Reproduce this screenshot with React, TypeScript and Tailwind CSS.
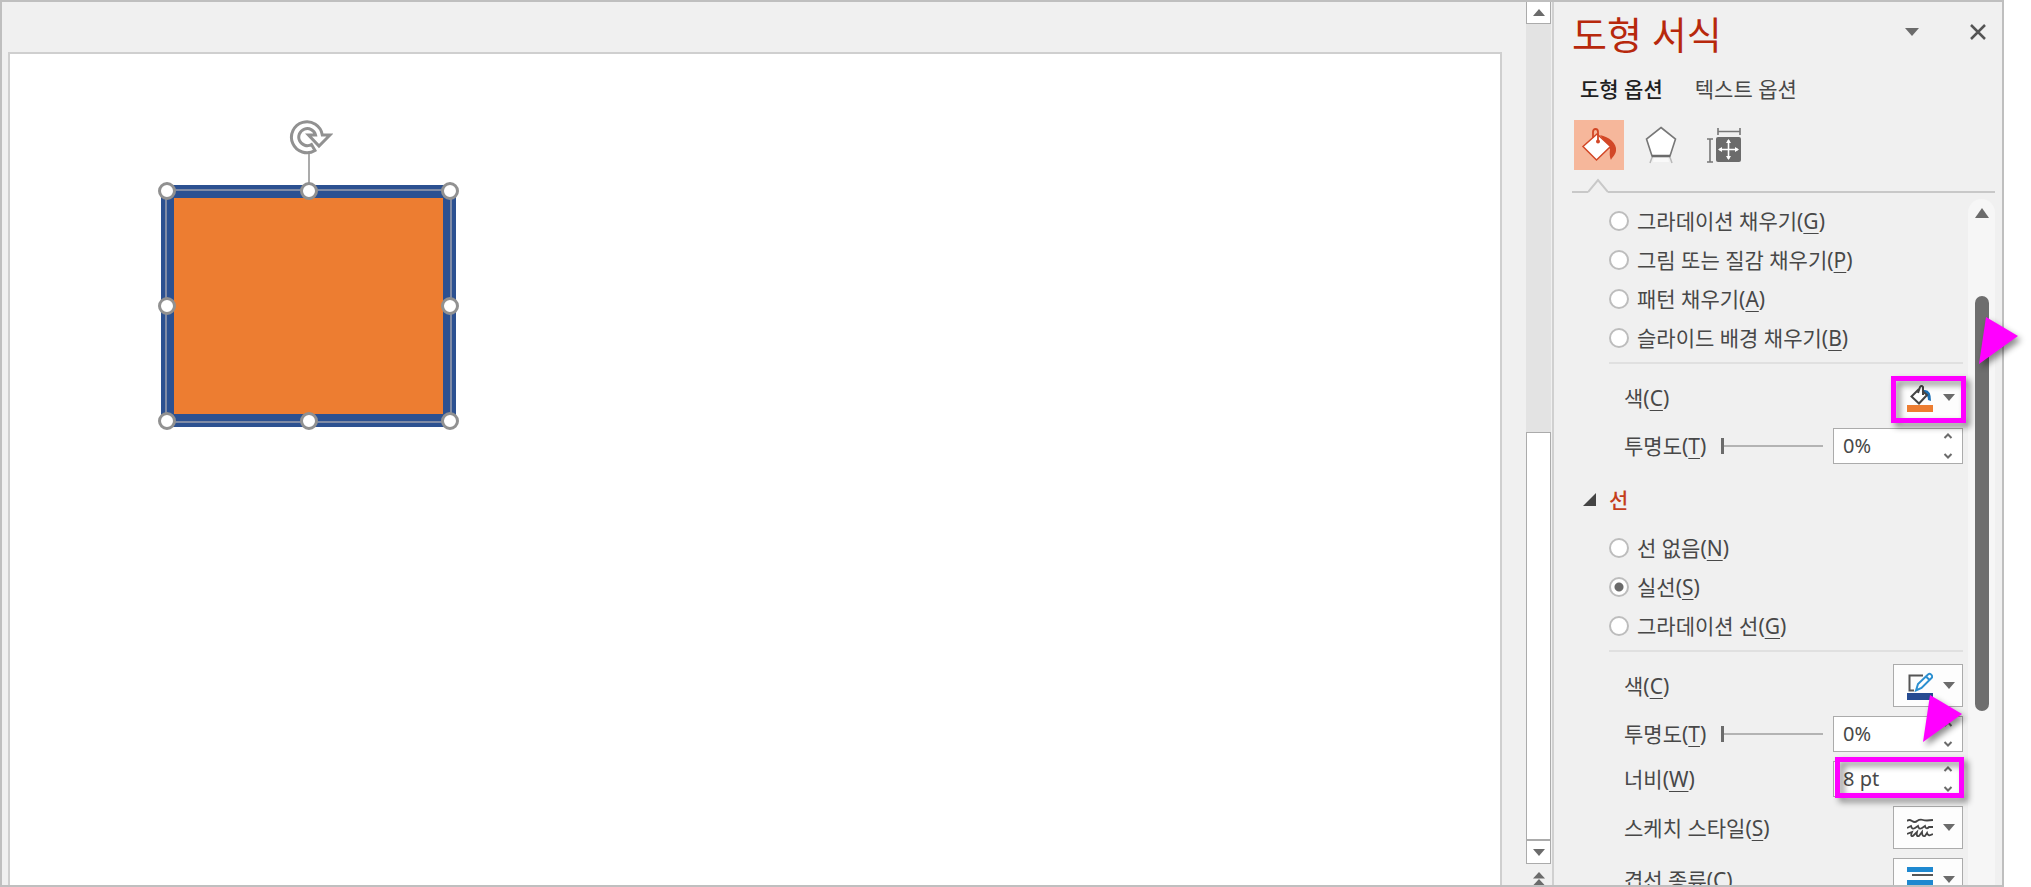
import { ReactNode, useState } from 'react';

interface Option {
  label: string;
  accel: string;
}

const fillOptions: Option[] = [
  { label: '그라데이션 채우기', accel: 'G' },
  { label: '그림 또는 질감 채우기', accel: 'P' },
  { label: '패턴 채우기', accel: 'A' },
  { label: '슬라이드 배경 채우기', accel: 'B' },
];

const lineOptions: Option[] = [
  { label: '선 없음', accel: 'N' },
  { label: '실선', accel: 'S' },
  { label: '그라데이션 선', accel: 'G' },
];

const handles = [
  'left-0 top-0',
  'left-1/2 top-0',
  'left-full top-0',
  'left-0 top-1/2',
  'left-full top-1/2',
  'left-0 top-full',
  'left-1/2 top-full',
  'left-full top-full',
];

function Accel({ label, accel }: Option) {
  return (
    <>
      {label}(<span className="underline decoration-1 underline-offset-4">{accel}</span>)
    </>
  );
}

function Triangle({ up = false, className = 'w-3 h-[7px]' }: { up?: boolean; className?: string }) {
  return (
    <svg viewBox="0 0 12 7" preserveAspectRatio="none" className={className} fill="#6b6b6b">
      <path d={up ? 'M0 7 L6 0 L12 7 Z' : 'M0 0 H12 L6 7 Z'} />
    </svg>
  );
}

function RadioList({ name, options, initial }: { name: string; options: Option[]; initial?: string }) {
  const [value, setValue] = useState(initial);
  return (
    <div>
      {options.map((o) => (
        <label key={o.label} className="flex items-center gap-2 h-[39px]">
          <input
            type="radio"
            name={name}
            checked={value === o.label}
            onChange={() => setValue(o.label)}
            className="appearance-none w-5 h-5 rounded-full border-2 border-[#bdbdbd] bg-white checked:bg-[radial-gradient(circle,#6b6b6b_4px,#fff_5px)]"
          />
          <span>
            <Accel {...o} />
          </span>
        </label>
      ))}
    </div>
  );
}

function Spin({ id, initial }: { id: string; initial: string }) {
  const [value, setValue] = useState(initial);
  return (
    <div className="flex items-center w-[130px] h-9 bg-white border border-[#ababab]">
      <input
        id={id}
        value={value}
        onChange={(e) => setValue(e.target.value)}
        className="flex-1 min-w-0 pl-[9px] text-[20px] leading-[28px] outline-none bg-transparent"
      />
      <div className="flex flex-col justify-between w-7 h-[26px] items-center">
        <button aria-label="늘리기">
          <svg width="10" height="6" viewBox="0 0 10 6" fill="none" stroke="#6b6b6b" strokeWidth="2" className="block">
            <path d="M1.5 5 L5 1.5 L8.5 5" />
          </svg>
        </button>
        <button aria-label="줄이기">
          <svg width="10" height="6" viewBox="0 0 10 6" fill="none" stroke="#6b6b6b" strokeWidth="2" className="block">
            <path d="M1.5 1 L5 4.5 L8.5 1" />
          </svg>
        </button>
      </div>
    </div>
  );
}

function Picker({ label, children }: { label: string; children: ReactNode }) {
  return (
    <button aria-label={label} className="flex items-center gap-[10px] w-[70px] h-[43px] pl-[13px] bg-[#fdfdfd] border border-[#ababab]">
      {children}
      <Triangle />
    </button>
  );
}

function Row({ label, accel, htmlFor, children }: Option & { htmlFor?: string; children: ReactNode }) {
  return (
    <div className="flex items-center pl-[15px]">
      <label htmlFor={htmlFor} className="mr-auto">
        <Accel label={label} accel={accel} />
      </label>
      {children}
    </div>
  );
}

function Transparency({ id }: { id: string }) {
  return (
    <Row label="투명도" accel="T" htmlFor={id}>
      <input
        type="range"
        defaultValue={0}
        aria-label="투명도"
        className="appearance-none w-[102px] h-4 mr-[10px] bg-[linear-gradient(#b3b3b3,#b3b3b3)] bg-[length:100%_2px] bg-center bg-no-repeat [&::-webkit-slider-thumb]:appearance-none [&::-webkit-slider-thumb]:w-[3px] [&::-webkit-slider-thumb]:h-4 [&::-webkit-slider-thumb]:bg-[#6b6b6b]"
      />
      <Spin id={id} initial="0%" />
    </Row>
  );
}

function Pointer({ className }: { className: string }) {
  return (
    <svg
      width="39"
      height="47"
      viewBox="0 0 39 47"
      fill="#ff00ff"
      className={`absolute z-10 overflow-visible drop-shadow-[3px_4px_3px_rgba(0,0,0,0.45)] ${className}`}
    >
      <path d="M7 0 L39 19 L0 47 Z" />
    </svg>
  );
}

function Canvas() {
  return (
    <main className="flex-1 min-w-0 pt-[50px] pl-[6px] pr-6">
      <div className="relative h-full bg-white border-2 border-b-0 border-[#cfcfcf]">
        <div className="absolute left-[151px] top-[131px] w-[295px] h-[242px] bg-[#ed7d31] border-[13px] border-[#2c5191]">
          <div className="absolute -inset-[9px] border-2 border-[#7f8ba6]">
            <div className="absolute left-1/2 bottom-full w-[2px] h-10 -translate-x-1/2 bg-[#ababab]" />
            <svg width="44" height="36" viewBox="0 0 44 36" className="absolute left-1/2 bottom-full mb-[36px] -ml-[20px]">
              <circle cx="18" cy="18" r="16" fill="#fff" />
              <path
                d="M26 31.5 A15.5 15.5 0 1 1 33.3 16 H41 L30 27 L19.500 16 H26.5 A8.500 8.500 0 1 0 22.500 25.500 Z"
                fill="#fff"
                stroke="#919191"
                strokeWidth="3"
              />
            </svg>
            {handles.map((pos) => (
              <span key={pos} className={`absolute w-[18px] h-[18px] -translate-1/2 rounded-full bg-white border-3 border-[#919191] ${pos}`} />
            ))}
          </div>
        </div>
      </div>
    </main>
  );
}

function SlideScrollbar() {
  return (
    <div className="flex flex-col w-[26px] shrink-0">
      <button aria-label="위로" className="flex items-center justify-center w-[25px] h-[22px] bg-white border border-t-0 border-[#ababab]">
        <Triangle up />
      </button>
      <div className="flex flex-col justify-end flex-1 w-[25px] bg-[#e3e3e3]">
        <div className="h-1/2 bg-white border border-[#ababab]" />
      </div>
      <button aria-label="아래로" className="flex items-center justify-center w-[25px] h-6 bg-white border border-[#ababab]">
        <Triangle />
      </button>
      <button aria-label="이전 슬라이드" className="flex flex-col items-center w-[25px] h-[21px] pt-2">
        <Triangle up />
        <Triangle up />
      </button>
    </div>
  );
}

function Header() {
  return (
    <header>
      <div className="flex items-start pl-[18px] pr-4 pt-[11px]">
        <h1 className="mr-auto text-[38px] leading-[42px] text-[#b7280c]">도형 서식</h1>
        <button aria-label="작업창 옵션" className="flex items-center h-[38px] mr-[51px]">
          <Triangle className="w-[14px] h-2" />
        </button>
        <button aria-label="닫기" className="flex items-center h-[38px]">
          <svg width="16" height="16" viewBox="0 0 16 16" stroke="#555" strokeWidth="2.5">
            <path d="M1 1 L15 15 M15 1 L1 15" />
          </svg>
        </button>
      </div>
      <div className="flex gap-8 pl-[26px] mt-5 leading-[28px]">
        <button className="font-medium text-[#1f1f1f]">도형 옵션</button>
        <button>텍스트 옵션</button>
      </div>
      <div className="flex items-center pl-5 mt-[17px]">
        <button aria-label="채우기 및 선" className="flex items-center justify-center w-[50px] h-[50px] bg-[#f6b79b]">
          <svg width="36" height="36" viewBox="0 0 36 36">
            <path d="M19 8 C28 10 36 16 35 24 C34 29 31 30 30 33 Q28 29 29 22 Z" fill="#d24726" />
            <path d="M16 7 L29.500 19.500 L15.500 33 L2 19.500 Z" fill="#fff" stroke="#d24726" strokeWidth="1.5" />
            <path d="M12 11 V5 Q12 2 14.500 2 Q17 2 17 5 V14" fill="none" stroke="#d24726" strokeWidth="1.8" />
            <circle cx="17" cy="14.500" r="2" fill="#d24726" />
          </svg>
        </button>
        <button aria-label="효과" className="ml-[21px]">
          <svg width="32" height="38" viewBox="0 0 32 38" className="block">
            <path d="M7.500 30 L5 37 M24.500 30 L27 37" stroke="#b8b8b8" strokeWidth="1.5" />
            <path d="M16 1.500 L30.500 13 L25 30 H7 L1.500 13 Z" fill="#fff" stroke="#777" strokeWidth="1.6" />
            <path d="M7 30 H25" stroke="#6b6b6b" strokeWidth="2.5" />
            <path d="M9 32 H23 L24 36 H8 Z" fill="#f9f9f9" />
          </svg>
        </button>
        <button aria-label="크기 및 속성" className="ml-[29px]">
          <svg width="36" height="36" viewBox="0 0 36 36" className="block" stroke="#777" fill="none" strokeWidth="1.6">
            <path d="M12 1 V8 M34 1 V8 M12 4.500 H34 M1 12 H7 M1 35 H7 M4 12 V35" />
            <rect x="10" y="10" width="25" height="25" rx="2" fill="#6b6b6b" stroke="none" />
            <path d="M13 22.500 H32 M22.500 13 V32" stroke="#fff" />
            <path d="M22.500 12 L25 16 H20 Z M22.500 33 L25 29 H20 Z M12 22.500 L16 20 V25 Z M33 22.500 L29 20 V25 Z" fill="#fff" stroke="none" />
          </svg>
        </button>
      </div>
      <div className="flex items-end mt-2 ml-[18px] mr-[7px]">
        <div className="w-4 h-[2px] bg-[#c8c8c8]" />
        <svg width="20" height="15" viewBox="0 0 20 15" fill="none" stroke="#c8c8c8" strokeWidth="2">
          <path d="M0 14 L10 2 L20 14" />
        </svg>
        <div className="flex-1 h-[2px] bg-[#c8c8c8]" />
      </div>
    </header>
  );
}

export default function App() {
  return (
    <div className="h-screen pr-[27px] bg-white overflow-hidden text-[21px] text-[#484848] font-['Noto_Sans','Noto_Sans_CJK_KR',sans-serif]">
      <div className="flex h-full bg-[#f0f0f0] border-2 border-[#bfbfbf]">
        <Canvas />
        <SlideScrollbar />
        <aside className="flex flex-col w-[450px] shrink-0 border-l-2 border-[#d0d0d0]">
          <Header />
          <div className="flex flex-1 min-h-0 pr-[7px]">
            <div className="flex-1 overflow-y-clip pl-[55px] pr-[5px] pt-2 leading-[28px]">
              <RadioList name="fill" options={fillOptions} />
              <hr className="mt-[5px] mb-3 border-t-2 border-[#e0e0e0]" />
              <div className="flex flex-col gap-[9px]">
                <Row label="색" accel="C">
                  <div className="relative">
                    <Picker label="채우기 색">
                      <svg width="26" height="28" viewBox="0 0 26 28">
                        <path d="M17 6 Q24 5 24 17 L21 16 Q21 11 17 9 Z" fill="#1b6fb5" />
                        <path d="M12 5 L4.500 12.500 L12 19.500 L20 11 L15.500 7" fill="#fff" stroke="#444" strokeWidth="2" />
                        <path d="M11 9 L13 3 Q14.500 1 16 3 V11" fill="none" stroke="#444" strokeWidth="2" />
                        <rect y="21" width="26" height="7" fill="#ed7d31" />
                      </svg>
                    </Picker>
                    <div className="absolute -left-[2px] top-0 w-[75px] h-[47px] border-5 border-[#ff00ff] drop-shadow-[4px_4px_3px_rgba(0,0,0,0.45)]" />
                  </div>
                </Row>
                <Transparency id="fill-transparency" />
              </div>

              <div className="flex items-center mt-4 mb-[9px] h-[39px]">
                <svg width="13" height="13" viewBox="0 0 13 13" fill="#444" className="-ml-[26px] mr-[13px]">
                  <path d="M13 0 V13 H0 Z" />
                </svg>
                <h2 className="font-medium text-[#c43e1c]">선</h2>
              </div>
              <RadioList name="line" options={lineOptions} initial="실선" />
              <hr className="mt-[5px] mb-3 border-t-2 border-[#e0e0e0]" />
              <div className="flex flex-col gap-[9px]">
                <Row label="색" accel="C">
                  <div className="relative">
                    <Picker label="선 색">
                      <svg width="26" height="28" viewBox="0 0 26 28">
                        <path d="M16 3.500 H2.500 V18.500 H7" fill="none" stroke="#555" strokeWidth="2" />
                        <path d="M9 18.500 L11 12 L21 2.500 Q23 1 24.500 3 Q26 5 24 6.500 L14.500 16 Z M19 4.500 L22.500 8" fill="#fff" stroke="#2b8fd0" strokeWidth="2" />
                        <rect y="21" width="26" height="7" fill="#264b91" />
                      </svg>
                    </Picker>
                    <Pointer className="left-[30px] top-[31px]" />
                  </div>
                </Row>
                <Transparency id="line-transparency" />
                <Row label="너비" accel="W" htmlFor="line-width">
                  <div className="relative">
                    <Spin id="line-width" initial="8 pt" />
                    <div className="absolute left-[2px] -top-1 w-[129px] h-[41px] border-5 border-[#ff00ff] drop-shadow-[4px_4px_3px_rgba(0,0,0,0.45)]" />
                  </div>
                </Row>
                <Row label="스케치 스타일" accel="S">
                  <Picker label="스케치 스타일">
                    <svg width="26" height="20" viewBox="0 0 26 20" fill="none" stroke="#444" strokeWidth="1.8">
                      <path d="M0 3 Q2 1 5 3 T10 3 Q13 1 16 2 T26 2" />
                      <path d="M0 10 L4 8 Q5 12 8 10 L11 8 Q12 12 15 10 L18 8 Q19 12 22 9 L26 9" />
                      <path d="M0 16 L5 14 Q3 19 6 18 L10 14 Q9 19 12 18 L15 14 Q15 19 18 18 L20 15 Q21 19 26 16" />
                    </svg>
                  </Picker>
                </Row>
                <Row label="겹선 종류" accel="C">
                  <Picker label="겹선 종류">
                    <svg width="26" height="26" viewBox="0 0 26 26">
                      <rect width="26" height="5" fill="#1e88d0" />
                      <rect x="5" y="7" width="21" height="2" fill="#555" />
                      <rect y="13" width="26" height="5" fill="#1e88d0" />
                      <rect x="5" y="21" width="21" height="2" fill="#555" />
                    </svg>
                  </Picker>
                </Row>
              </div>
            </div>

            <div className="flex flex-col items-center w-[27px] mt-[6px] rounded-t-full bg-[#f6f6f6]">
              <Triangle up className="w-[14px] h-[10px] mt-[9px] shrink-0" />
              <div className="relative w-[14px] h-[415px] mt-[78px] rounded-full bg-[#6e6e6e]">
                <Pointer className="left-1 top-[21px]" />
              </div>
            </div>
          </div>
        </aside>
      </div>
    </div>
  );
}
